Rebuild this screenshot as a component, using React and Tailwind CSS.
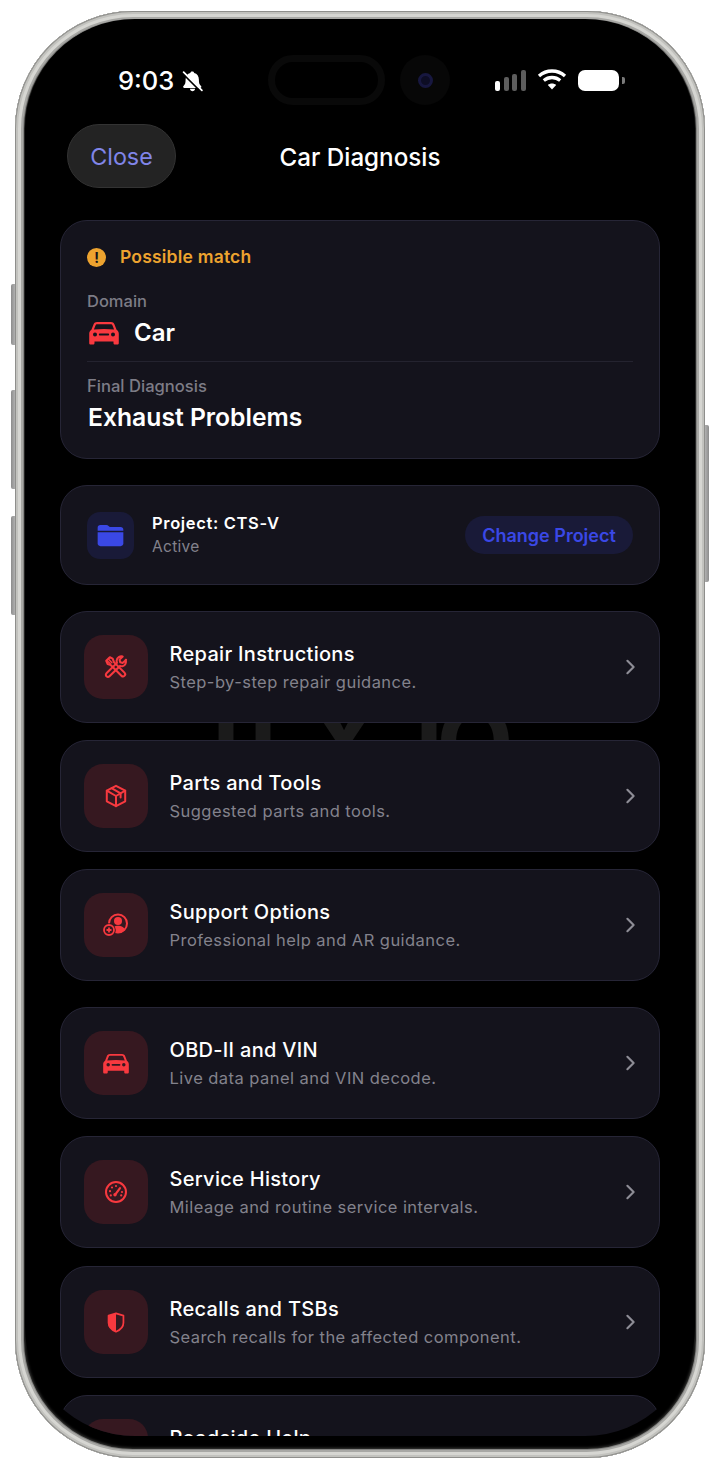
const Car = ({ className }) => (
  <svg viewBox="0 0 30 24" className={className} fill="currentColor">
    <path fillRule="evenodd" d="M8 1h14c1.600 0 2.800.8 3.400 2.200L27.600 8.800C29 9.700 29.800 11 29.800 12.800V22c0 1-.6 1.600-1.600 1.600h-2.100c-1 0-1.600-.6-1.600-1.600v-1.600H5.500V22c0 1-.6 1.600-1.600 1.600H1.800C.8 23.600.2 23 .2 22V12.800C.2 11 1 9.700 2.400 8.800L4.600 3.200C5.200 1.800 6.400 1 8 1zM8.200 3.200c-.9 0-1.400.4-1.700 1.200L4.900 8.500c3-.4 6.400-.6 10.100-.6s7.100.2 10.100.6L23.500 4.400c-.3-.8-.8-1.200-1.700-1.200zM6 11.500a2 2 0 100 4 2 2 0 000-4zM24 11.500a2 2 0 100 4 2 2 0 000-4zM11 12.500c-.7 0-1.100.4-1.100 1s.4 1 1.100 1h8c.7 0 1.100-.4 1.100-1s-.4-1-1.100-1z" />
  </svg>
);

const Tools = () => (
  <svg viewBox="0 0 24 24" className="w-[26px] h-[26px]" fill="none" stroke="currentColor" strokeWidth="1.900" strokeLinejoin="round" strokeLinecap="round">
    <path d="M3 6.200 6.300 3l2.600 1.300 1.200 3.200 9.700 9.700c.9.900.9 2 .2 2.700l-.3.3c-.7.7-1.800.7-2.700-.2L7.300 10.300 4.300 9.200z" />
    <path d="M5.200 4.800 8.200 8M3.900 6.300l3 3" strokeWidth="1.300" />
    <path d="M21.300 5.300 18.300 8.200 15.900 7.600 15.300 5.200 18.200 2.400c-2.600-.7-5.300.9-5.600 3.600-.1.800 0 1.500.3 2.200L3.400 17.600c-1 1-1 2.200-.2 3 .8.800 2 .8 3-.2l9.500-9.400c.7.300 1.500.4 2.300.3 2.600-.4 3.700-3.400 3-6z" />
  </svg>
);

const Box = () => (
  <svg viewBox="0 0 24 24" className="w-[24px] h-[24px]" fill="none" stroke="currentColor" strokeWidth="2" strokeLinejoin="round" strokeLinecap="round">
    <path d="M12 1.800 21.200 6.700V17.300L12 22.200 2.800 17.300V6.700z" />
    <path d="M2.800 6.700 12 12l9.200-5.300M12 12v10.200" />
    <path d="M7.500 4.200 16.600 9.400v4" />
  </svg>
);

const Support = () => (
  <svg viewBox="0 0 26 24" className="w-[26px] h-[24px]">
    <circle cx="15" cy="10.500" r="9" fill="none" stroke="currentColor" strokeWidth="2" />
    <circle cx="15" cy="8" r="4" fill="currentColor" />
    <path d="M8 17c1-3.200 4-4.300 7-4.300s6 1.100 7 4.300c-1.700 1.900-4.200 3-7 3s-5.300-1.100-7-3z" fill="currentColor" />
    <circle cx="6" cy="17" r="6.800" fill="#361820" />
    <circle cx="6" cy="17" r="5" fill="none" stroke="currentColor" strokeWidth="1.800" />
    <path d="M6 14.500v5M3.500 17h5" stroke="currentColor" strokeWidth="1.800" />
  </svg>
);

const Gauge = () => (
  <svg viewBox="0 0 24 24" className="w-[24px] h-[24px]" fill="none" stroke="currentColor">
    <circle cx="12" cy="12" r="10" strokeWidth="2" />
    <path d="M11.200 14.600 16 8.200" strokeWidth="2.200" strokeLinecap="round" />
    <circle cx="11" cy="14.800" r="1.700" fill="currentColor" stroke="none" />
    <g fill="currentColor" stroke="none">
      <circle cx="12" cy="6" r="1.100" />
      <circle cx="8" cy="7.500" r="1.100" />
      <circle cx="6" cy="11.200" r="1.100" />
      <circle cx="6.800" cy="15.400" r="1.100" />
      <circle cx="18" cy="12" r="1.100" />
      <circle cx="17.200" cy="15.400" r="1.100" />
    </g>
  </svg>
);

const Shield = () => (
  <svg viewBox="0 0 20 24" className="w-[18px] h-[21px]">
    <path d="M10 1.500 18.500 4.200v8c0 4.800-3.500 8.200-8.500 10.300C5 20.400 1.500 17 1.500 12.200v-8z" fill="none" stroke="currentColor" strokeWidth="2" strokeLinejoin="round" />
    <path d="M10 1.500 1.500 4.200v8C1.500 17 5 20.400 10 22.500z" fill="currentColor" />
  </svg>
);

const Chevron = () => (
  <svg viewBox="0 0 12 18" className="w-[11px] h-[16px] shrink-0" fill="none" stroke="#8e8d96" strokeWidth="2.400" strokeLinecap="round" strokeLinejoin="round">
    <path d="M2.500 2 9.500 9 2.500 16" />
  </svg>
);

const BellOff = () => (
  <svg viewBox="0 0 22 22" className="w-[23px] h-[23px] text-white" fill="currentColor">
    <path d="M11 1.500c.9 0 1.500.6 1.600 1.400 2.900.7 4.500 3.100 4.500 6.100 0 3.300.5 4.700 1.600 5.800.5.500.8.900.8 1.300 0 .6-.5 1-1.200 1H3.200c-.7 0-1.200-.4-1.200-1 0-.4.3-.8.8-1.300C3.900 13.700 4.400 12.300 4.400 9c0-3 1.600-5.400 4.500-6.100.1-.8.700-1.400 1.600-1.400z" />
    <path d="M8.500 18h5c-.2 1.400-1.200 2.300-2.500 2.300S8.700 19.400 8.500 18z" />
    <path d="M2.500 4.200 18 19.700" stroke="#000" strokeWidth="1.800" />
    <path d="M2.500 2 20 19.500" stroke="currentColor" strokeWidth="1.700" strokeLinecap="round" />
  </svg>
);

const Folder = () => (
  <svg viewBox="0 0 28 24" className="w-[27px] h-[23px] text-[#3a48e6]" fill="currentColor">
    <path d="M3.500 1h6.200c1 0 1.600.3 2.300 1l1.300 1.200h11.200c1.800 0 2.900 1 2.900 2.900v.9H.6V3.800C.6 2 1.700 1 3.500 1z" />
    <path d="M.6 8.500h26.800v11.700c0 1.900-1.100 2.900-2.900 2.900H3.500c-1.800 0-2.900-1-2.900-2.900z" />
  </svg>
);

const rows = [
  { title: "Repair Instructions", sub: "Step-by-step repair guidance.", icon: <Tools /> },
  { title: "Parts and Tools", sub: "Suggested parts and tools.", icon: <Box />, mt: "mt-[17px]" },
  { title: "Support Options", sub: "Professional help and AR guidance.", icon: <Support />, mt: "mt-[17px]" },
  { title: "OBD-II and VIN", sub: "Live data panel and VIN decode.", icon: <Car className="w-[26px] h-[21px]" />, mt: "mt-[26px]" },
  { title: "Service History", sub: "Mileage and routine service intervals.", icon: <Gauge />, mt: "mt-[17px]" },
  { title: "Recalls and TSBs", sub: "Search recalls for the affected component.", icon: <Shield />, mt: "mt-[18px]" },
  { title: "Roadside Help", sub: "Towing and emergency contacts.", icon: <Car className="w-[26px] h-[21px]" />, mt: "mt-[17px]" },
];

const cardCls = "bg-[#14131c] border border-[#262536] rounded-[27px]";

function Row({ title, sub, icon, mt = "" }) {
  return (
    <div className={`relative h-[112px] shrink-0 flex items-center pl-[23px] pr-[23px] ${cardCls} ${mt}`}>
      <div className="w-[64px] h-[64px] rounded-[19px] bg-[#361820] text-[#f8393f] flex items-center justify-center shrink-0">
        {icon}
      </div>
      <div className="ml-[21.500px] flex-1 min-w-0">
        <div className="text-[20px] leading-[26px] font-medium text-white tracking-[0.3px]">{title}</div>
        <div className="mt-[3px] text-[16.500px] leading-[24px] text-[#83828c] tracking-[0.45px]">{sub}</div>
      </div>
      <Chevron />
    </div>
  );
}

export default function App() {
  return (
    <div className="relative w-[720px] h-[1469px] bg-white overflow-hidden font-['Inter',sans-serif]">
      {/* side buttons */}
      <div className="absolute left-[11px] top-[284px] w-[6px] h-[61px] rounded-l-[2px] bg-gradient-to-r from-[#8c8c8c] to-[#c4c4c4]" />
      <div className="absolute left-[11px] top-[390px] w-[6px] h-[99px] rounded-l-[2px] bg-gradient-to-r from-[#8c8c8c] to-[#c4c4c4]" />
      <div className="absolute left-[11px] top-[516px] w-[6px] h-[99px] rounded-l-[2px] bg-gradient-to-r from-[#8c8c8c] to-[#c4c4c4]" />
      <div className="absolute right-[11px] top-[425px] w-[6px] h-[157px] rounded-r-[2px] bg-gradient-to-l from-[#8c8c8c] to-[#c4c4c4]" />

      {/* phone frame */}
      <div className="absolute left-[15px] top-[11px] w-[690px] h-[1447px] rounded-[118px] bg-black overflow-hidden shadow-[inset_0_0_0_1px_#8f8f8c,inset_0_0_0_3px_#c2c2be,inset_0_0_0_6px_#d6d6d2,inset_0_0_0_8px_#a8a8a5,inset_0_0_0_9px_#858583,inset_0_0_3px_10px_#3c3c3a]">
        {/* speaker cut in the top bezel */}
        <div className="absolute left-[230px] top-[9px] w-[230px] h-[4px] rounded-b-[4px] bg-black" />
        <div className="absolute left-[10px] top-[8px] right-[10px] bottom-[22px] rounded-[110px] overflow-hidden bg-black">
          {/* ghost text behind the cards */}
          <div className="absolute left-[183px] top-[663px] flex h-[120px] text-[100px] leading-[120px] font-bold text-[#1b1b1b]">
            <span className="w-[36px] text-center">I</span>
            <span className="w-[38px] text-center">I</span>
            <span className="ml-[25px] w-[72px] text-center">X</span>
            <span className="ml-[36px] w-[18px] text-center">I</span>
            <span className="ml-[3px] w-[78px] text-center">O</span>
          </div>

          <div className="relative flex flex-col h-full pl-[35px] pr-[35px]">
            {/* status bar */}
            <div className="relative h-[105px] shrink-0">
              <div className="absolute left-[58px] top-[46px] flex items-center gap-[7px] text-white">
                <span className="text-[25.500px] leading-[32px] font-medium">9:03</span>
                <BellOff />
              </div>
              <div className="absolute left-[208px] top-[36px] w-[117px] h-[50px] rounded-full border-[7px] border-[#090909]" />
              <div className="absolute left-[340px] top-[36px] w-[50px] h-[50px] rounded-full bg-[#070707] flex items-center justify-center">
                <div className="w-[15px] h-[15px] rounded-full bg-[#0d0d24] border-[3px] border-[#17173f]" />
              </div>
              <div className="absolute left-[435px] top-[51px] flex items-end gap-[3.700px]">
                <div className="w-[5px] h-[10px] rounded-[2px] bg-white" />
                <div className="w-[5px] h-[14px] rounded-[2px] bg-[#5d5d5d]" />
                <div className="w-[5px] h-[17px] rounded-[2px] bg-[#5d5d5d]" />
                <div className="w-[5px] h-[21px] rounded-[2px] bg-[#5d5d5d]" />
              </div>
              <svg viewBox="0 0 30 22" className="absolute left-[477px] top-[49px] w-[30px] h-[22px]" fill="none" stroke="#fff" strokeWidth="3.300" strokeLinecap="butt">
                <path d="M2 8c7.500-6.700 18.500-6.700 26 0" />
                <path d="M6.800 12.500c4.700-4 11.700-4 16.400 0" />
                <path d="M15 21.500 10.800 17c2.400-2 6-2 8.400 0z" fill="#fff" stroke="none" />
              </svg>
              <div className="absolute left-[518px] top-[51px] flex items-center gap-[3px]">
                <div className="w-[41px] h-[21px] rounded-[7px] bg-white" />
                <div className="w-[3px] h-[7px] rounded-r-[2px] bg-[#7a7a7a]" />
              </div>
            </div>

            {/* nav bar */}
            <div className="relative h-[96px] shrink-0 flex items-start justify-center">
              <button className="absolute left-[7px] top-0 w-[109px] h-[64px] pt-[2px] rounded-full bg-[#232323] border border-[#333333] text-[#8085e8] text-[23.300px] font-normal">
                Close
              </button>
              <div className="mt-[19px] text-white text-[24.200px] leading-[30px] font-medium">Car Diagnosis</div>
            </div>

            {/* result card */}
            <div className={`shrink-0 h-[239px] px-[26px] pt-[24px] ${cardCls}`}>
              <div className="flex items-center gap-[14px]">
                <div className="w-[19px] h-[19px] rounded-full bg-[#eda32f] text-[#14131c] text-[14px] leading-[19px] font-bold text-center">!</div>
                <span className="text-[#eda32f] text-[17.500px] leading-[24px] font-semibold tracking-[0.2px]">Possible match</span>
              </div>
              <div className="mt-[22px] text-[#7d7c86] text-[16.500px] leading-[20px] font-medium">Domain</div>
              <div className="mt-[6px] flex items-center gap-[15px] h-[32px] text-[#f8393f]">
                <div className="pl-[2px]"><Car className="w-[30px] h-[24px]" /></div>
                <span className="text-white text-[24px] leading-[30px] font-semibold">Car</span>
              </div>
              <div className="mt-[12px] h-px bg-[#24232f]" />
              <div className="mt-[14px] text-[#7d7c86] text-[16.600px] leading-[20px] font-medium">Final Diagnosis</div>
              <div className="mt-[5px] pl-px text-white text-[24.700px] leading-[32px] font-semibold">Exhaust Problems</div>
            </div>

            {/* project card */}
            <div className={`mt-[26px] shrink-0 h-[100px] flex items-center pl-[26px] pr-[26px] ${cardCls}`}>
              <div className="w-[47px] h-[47px] rounded-[13px] bg-[#191a38] flex items-center justify-center shrink-0">
                <Folder />
              </div>
              <div className="ml-[18px] flex-1 min-w-0">
                <div className="text-white text-[16.500px] leading-[22px] font-semibold tracking-[0.65px]">Project: CTS-V</div>
                <div className="mt-[2px] text-[#83828c] text-[15.500px] leading-[22px] tracking-[0.3px]">Active</div>
              </div>
              <button className="w-[168px] h-[38px] rounded-full bg-[#191a38] text-[#3a48e6] text-[18px] font-semibold">
                Change Project
              </button>
            </div>

            {/* rows */}
            <div className="mt-[26px] flex flex-col">
              {rows.map((r) => (
                <Row key={r.title} {...r} />
              ))}
            </div>
          </div>
        </div>
      </div>
    </div>
  );
}
